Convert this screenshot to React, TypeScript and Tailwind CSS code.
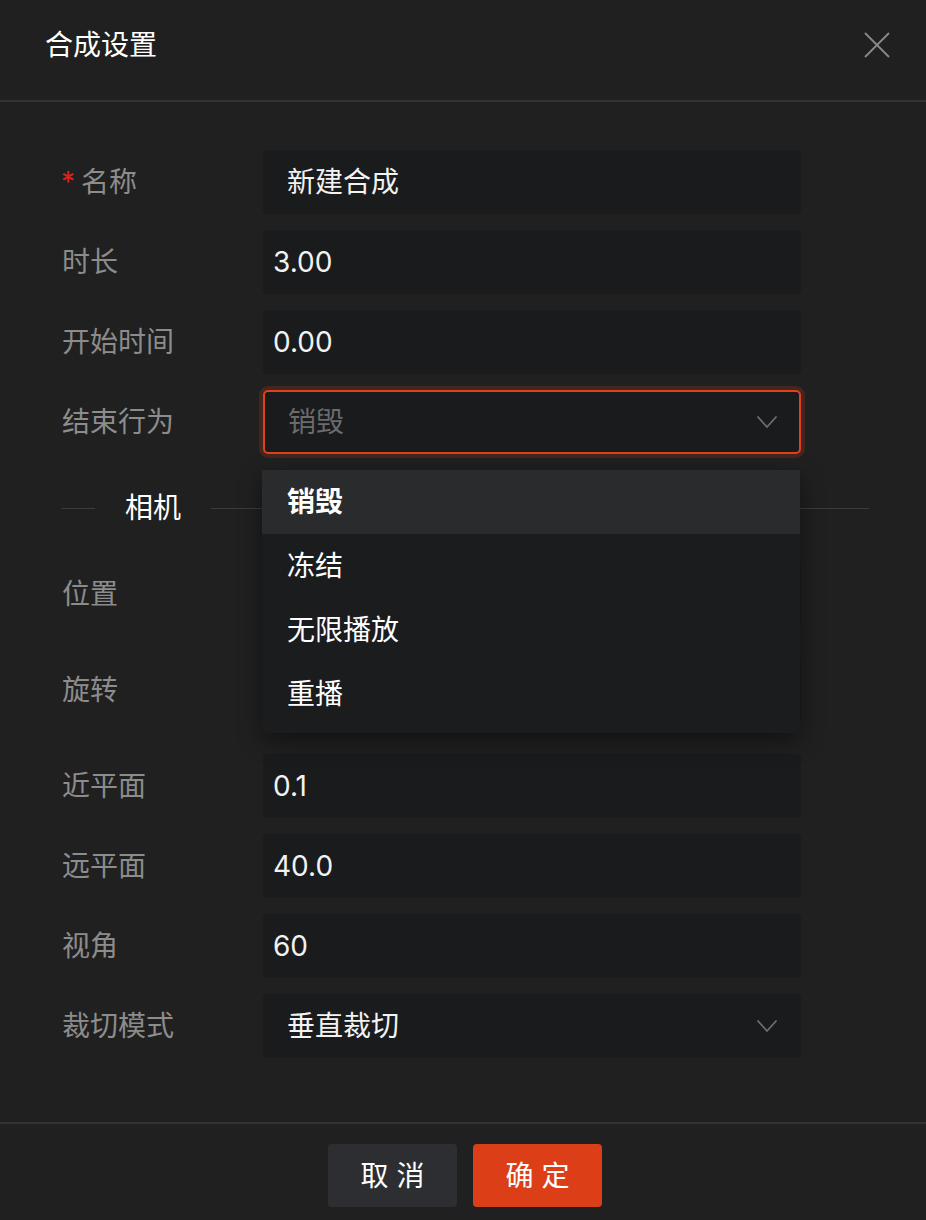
import React from 'react';

const labelCls = 'w-[201px] shrink-0 text-[28px] leading-none text-[#8c8c8c]';
const boxCls = 'w-[538px] h-[64px] rounded-[4px] bg-[#1a1b1d] flex items-center text-[28px] leading-none text-[#f2f2f2]';

const Chevron = () => (
  <svg width="22" height="14" viewBox="0 0 22 14" fill="none" className="shrink-0">
    <polyline points="1.5,1.5 11,12 20.5,1.5" stroke="#6e6e6e" strokeWidth="1.8" strokeLinejoin="miter" />
  </svg>
);

const Row: React.FC<{ label: React.ReactNode; className?: string; children: React.ReactNode }> = ({ label, className = '', children }) => (
  <div className={`flex items-center ${className}`}>
    <div className={labelCls}>{label}</div>
    {children}
  </div>
);

const options = ['销毁', '冻结', '无限播放', '重播'];

export default function App() {
  return (
    <div className="relative min-h-screen bg-[#202020] font-['Inter','Noto_Sans_CJK_SC',sans-serif]">
      {/* header */}
      <div className="h-[102px] border-b-2 border-[#333333] flex items-start justify-between pl-[45px] pr-[35px] pt-[27px]">
        <h1 className="text-[28px] leading-[36px] text-white">合成设置</h1>
        <button className="mt-[4px] w-[28px] h-[28px] flex items-center justify-center">
          <svg width="26" height="26" viewBox="0 0 26 26" fill="none">
            <line x1="1" y1="1" x2="25" y2="25" stroke="#8a8a8a" strokeWidth="1.8" />
            <line x1="25" y1="1" x2="1" y2="25" stroke="#8a8a8a" strokeWidth="1.8" />
          </svg>
        </button>
      </div>

      {/* form */}
      <div className="pl-[62px] pr-[57px] pt-[48px]">
        <Row label={<span><span className="text-[#d8261c] mr-[6px]">*</span>名称</span>} className="-ml-[1px]">
          <div className={`${boxCls} px-[24px] ml-[1px]`}>新建合成</div>
        </Row>
        <Row label="时长" className="mt-[16px]">
          <div className={`${boxCls} px-[10px]`}>3.00</div>
        </Row>
        <Row label="开始时间" className="mt-[16px]">
          <div className={`${boxCls} px-[10px]`}>0.00</div>
        </Row>
        <Row label="结束行为" className="mt-[16px]">
          <div className="w-[538px] h-[64px] rounded-[5px] bg-[#1a1b1d] border-2 border-[#e0401a] shadow-[0_0_0_4px_rgba(224,64,26,0.18)] flex items-center justify-between pl-[23px] pr-[21px] text-[28px] leading-none text-[#6b6b6b]">
            <span>销毁</span>
            <Chevron />
          </div>
        </Row>

        {/* section divider */}
        <div className="mt-[38px] h-[32px] flex items-center">
          <div className="w-[33px] h-px bg-[#3c3c3c]" />
          <span className="px-[30px] text-[28px] leading-none text-white">相机</span>
          <div className="flex-1 h-px bg-[#3c3c3c]" />
        </div>

        <Row label="位置" className="mt-[38px]">
          <div className="w-[538px] h-[64px] flex gap-[16px]">
            <div className="flex-1 rounded-[4px] bg-[#1a1b1d]" />
            <div className="flex-1 rounded-[4px] bg-[#1a1b1d]" />
            <div className="flex-1 rounded-[4px] bg-[#1a1b1d]" />
          </div>
        </Row>
        <Row label="旋转" className="mt-[32px]">
          <div className="w-[538px] h-[64px] flex gap-[16px]">
            <div className="flex-1 rounded-[4px] bg-[#1a1b1d]" />
            <div className="flex-1 rounded-[4px] bg-[#1a1b1d]" />
            <div className="flex-1 rounded-[4px] bg-[#1a1b1d]" />
          </div>
        </Row>
        <Row label="近平面" className="mt-[32px]">
          <div className={`${boxCls} px-[10px]`}>0.1</div>
        </Row>
        <Row label="远平面" className="mt-[16px]">
          <div className={`${boxCls} px-[10px]`}>40.0</div>
        </Row>
        <Row label="视角" className="mt-[16px]">
          <div className={`${boxCls} px-[10px]`}>60</div>
        </Row>
        <Row label="裁切模式" className="mt-[16px]">
          <div className={`${boxCls} justify-between pl-[24px] pr-[23px]`}>
            <span>垂直裁切</span>
            <Chevron />
          </div>
        </Row>
      </div>

      {/* footer */}
      <div className="mt-[64px] border-t-2 border-[#333333] pt-[20px] pb-[20px] pl-[4px] flex justify-center gap-[16px]">
        <button className="w-[129px] h-[63px] rounded-[4px] bg-[#2d2e31] text-[28px] leading-none text-white">取 消</button>
        <button className="w-[129px] h-[63px] rounded-[4px] bg-[#dc3f18] text-[28px] leading-none text-white">确 定</button>
      </div>

      {/* dropdown menu */}
      <div className="absolute left-[262px] top-[470px] w-[538px] pb-[7px] rounded-b-[6px] bg-[#1b1c1e] shadow-[0_8px_24px_rgba(0,0,0,0.45)]">
        {options.map((o, i) => (
          <div
            key={o}
            className={`h-[64px] flex items-center px-[25px] text-[28px] leading-none text-white ${i === 0 ? 'bg-[#2a2b2d] font-bold' : ''}`}
          >
            {o}
          </div>
        ))}
      </div>
    </div>
  );
}
